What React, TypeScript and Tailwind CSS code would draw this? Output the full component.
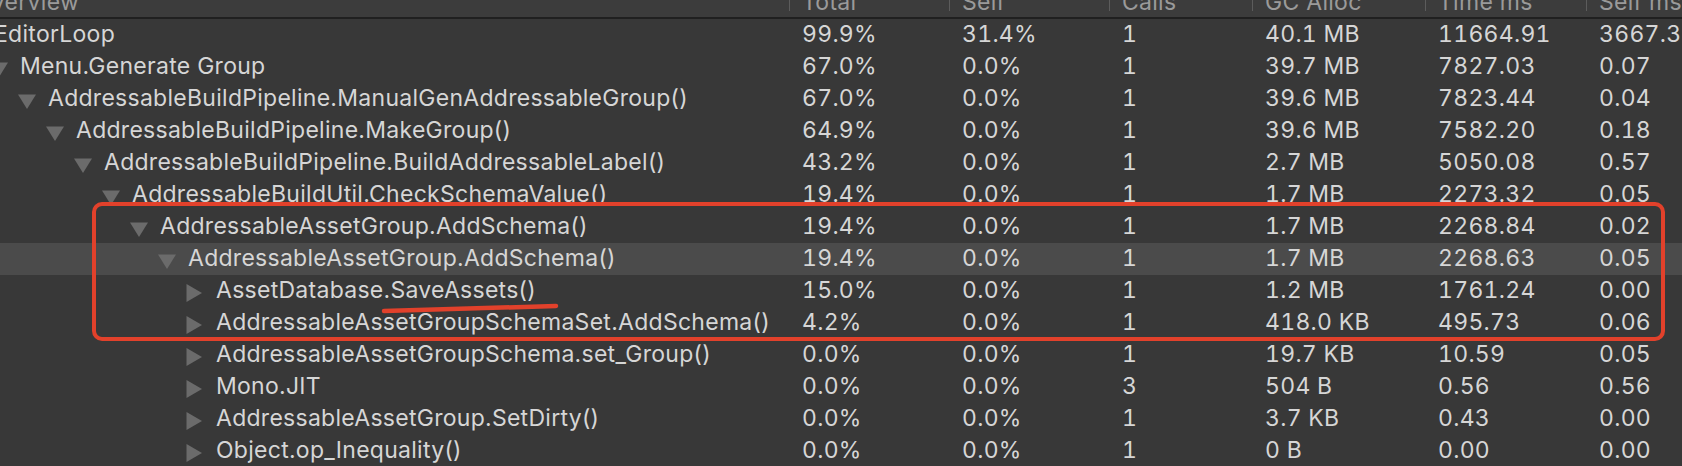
import React from 'react';

type Row = {
  name: string;
  depth: number;
  open?: boolean;
  selected?: boolean;
  cols: string[];
};

const columns = ['Total', 'Self', 'Calls', 'GC Alloc', 'Time ms', 'Self ms'];
const widths = ['w-[160px]', 'w-[160px]', 'w-[143px]', 'w-[173px]', 'w-[161px]', 'w-[160px]'];

const rows: Row[] = [
  { name: 'EditorLoop', depth: 0, open: true, cols: ['99.9%', '31.4%', '1', '40.1 MB', '11664.91', '3667.32'] },
  { name: 'Menu.Generate Group', depth: 1, open: true, cols: ['67.0%', '0.0%', '1', '39.7 MB', '7827.03', '0.07'] },
  { name: 'AddressableBuildPipeline.ManualGenAddressableGroup()', depth: 2, open: true, cols: ['67.0%', '0.0%', '1', '39.6 MB', '7823.44', '0.04'] },
  { name: 'AddressableBuildPipeline.MakeGroup()', depth: 3, open: true, cols: ['64.9%', '0.0%', '1', '39.6 MB', '7582.20', '0.18'] },
  { name: 'AddressableBuildPipeline.BuildAddressableLabel()', depth: 4, open: true, cols: ['43.2%', '0.0%', '1', '2.7 MB', '5050.08', '0.57'] },
  { name: 'AddressableBuildUtil.CheckSchemaValue()', depth: 5, open: true, cols: ['19.4%', '0.0%', '1', '1.7 MB', '2273.32', '0.05'] },
  { name: 'AddressableAssetGroup.AddSchema()', depth: 6, open: true, cols: ['19.4%', '0.0%', '1', '1.7 MB', '2268.84', '0.02'] },
  { name: 'AddressableAssetGroup.AddSchema()', depth: 7, open: true, selected: true, cols: ['19.4%', '0.0%', '1', '1.7 MB', '2268.63', '0.05'] },
  { name: 'AssetDatabase.SaveAssets()', depth: 8, cols: ['15.0%', '0.0%', '1', '1.2 MB', '1761.24', '0.00'] },
  { name: 'AddressableAssetGroupSchemaSet.AddSchema()', depth: 8, cols: ['4.2%', '0.0%', '1', '418.0 KB', '495.73', '0.06'] },
  { name: 'AddressableAssetGroupSchema.set_Group()', depth: 8, cols: ['0.0%', '0.0%', '1', '19.7 KB', '10.59', '0.05'] },
  { name: 'Mono.JIT', depth: 8, cols: ['0.0%', '0.0%', '3', '504 B', '0.56', '0.56'] },
  { name: 'AddressableAssetGroup.SetDirty()', depth: 8, cols: ['0.0%', '0.0%', '1', '3.7 KB', '0.43', '0.00'] },
  { name: 'Object.op_Inequality()', depth: 8, cols: ['0.0%', '0.0%', '1', '0 B', '0.00', '0.00'] },
];

function Arrow({ open }: { open?: boolean }) {
  return open ? (
    <svg width="18" height="15" viewBox="0 0 18 15" className="shrink-0">
      <path d="M0 0.5 H18 L9 15 Z" fill="#6b6b6b" />
    </svg>
  ) : (
    <svg width="16" height="18" viewBox="0 0 16 18" className="shrink-0">
      <path d="M0.5 0 L16 9 L0.5 18 Z" fill="#6b6b6b" />
    </svg>
  );
}

function TreeRow({ row }: { row: Row }) {
  return (
    <div className={`flex h-[32px] items-center ${row.selected ? 'bg-[#4b4b4b]' : ''}`}>
      <div
        className="flex w-[825px] shrink-0 items-center"
        style={{ paddingLeft: 28 * (row.depth + 1) - 30 }}
      >
        <div className="flex w-[30px] shrink-0 items-center pt-[4px]">
          <Arrow open={row.open} />
        </div>
        <span className="whitespace-nowrap pb-[2px]">{row.name}</span>
      </div>
      {row.cols.map((c, i) => (
        <div key={i} className={`${widths[i]} shrink-0 whitespace-nowrap pb-[2px] pl-[13px] tabular-nums`}>
          {c}
        </div>
      ))}
    </div>
  );
}

export default function App() {
  return (
    <div
      className="relative h-[466px] w-[1682px] overflow-hidden bg-[#383838] text-[23px] tracking-[0.012em] text-[#d6d6d6]"
      style={{ fontFamily: 'Inter, "Noto Sans", sans-serif' }}
    >
      <div className="-ml-[36px]">
        {/* column header, scrolled so only its lower half shows */}
        <div className="flex h-[19px] border-b-2 border-[#202020] bg-[#3c3c3c] text-[#9a9a9a]">
          <div className="w-[825px] shrink-0 overflow-hidden pl-[10px]">
            <div className="-mt-[9px] leading-[22px]">Overview</div>
          </div>
          {columns.map((c, i) => (
            <div key={c} className={`relative ${widths[i]} shrink-0 overflow-hidden pl-[13px]`}>
              <span className="absolute left-0 top-0 h-[11px] w-px bg-[#5c5c5c]" />
              <div className="-mt-[9px] whitespace-nowrap leading-[22px]">{c}</div>
            </div>
          ))}
        </div>
        {rows.map((r, i) => (
          <TreeRow key={i} row={r} />
        ))}
      </div>

      {/* hand-drawn annotation */}
      <div className="pointer-events-none absolute left-[92px] top-[202px] h-[139px] w-[1573px] rounded-[10px] border-4 border-[#e2412b]" />
      <svg className="pointer-events-none absolute left-0 top-0" width="1682" height="466">
        <path
          d="M384 311 C 445 309, 505 308, 556 306"
          stroke="#e2412b"
          strokeWidth="4.5"
          strokeLinecap="round"
          fill="none"
        />
      </svg>
    </div>
  );
}
